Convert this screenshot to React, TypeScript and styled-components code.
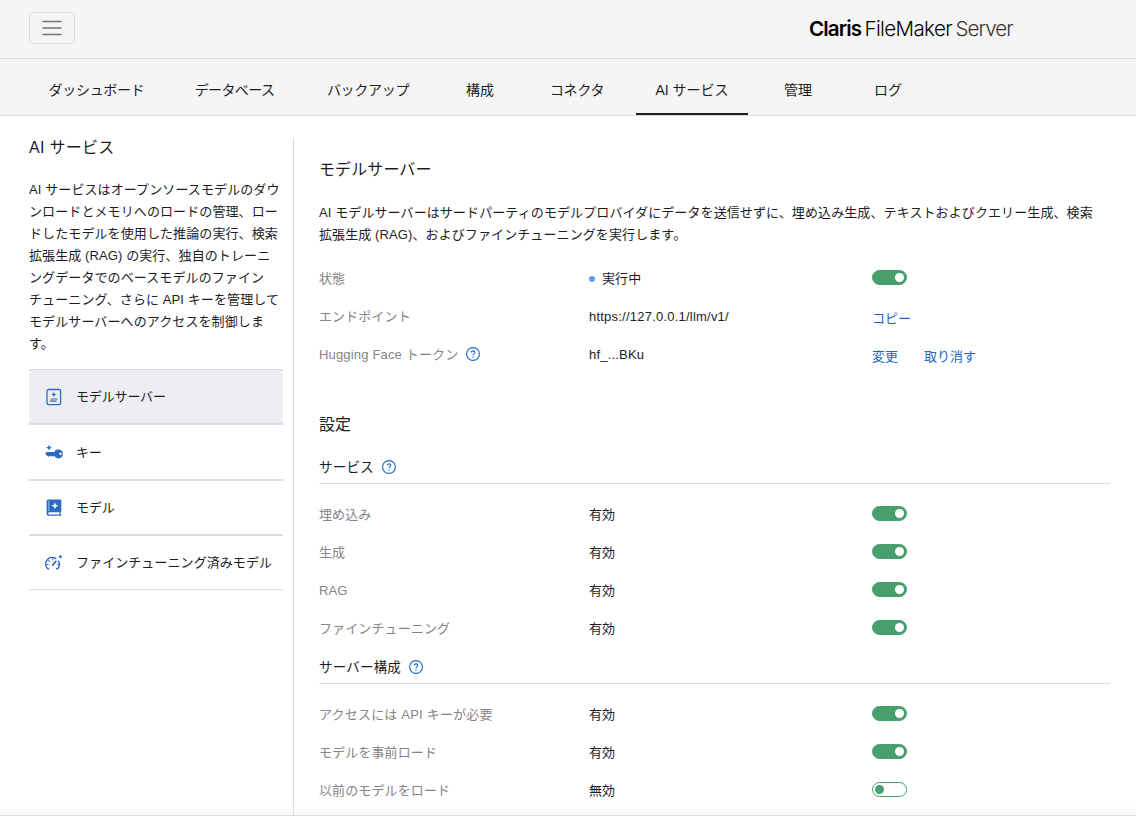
import React from "react";
import styled, { createGlobalStyle } from "styled-components";

const Global = createGlobalStyle`
  *, *::before, *::after { box-sizing: border-box; }
  html, body { margin: 0; padding: 0; background: #fff; }
  body {
    font-family: "Liberation Sans", "Noto Sans CJK JP", sans-serif;
    font-size: 13px;
    letter-spacing: 0.1px;
    color: #1d1d1f;
    overflow: hidden;
  }
`;

const Page = styled.div`
  display: flex;
  flex-direction: column;
  width: 1136px;
  height: 816px;
  overflow: hidden;
`;

const TopBar = styled.header`
  display: flex;
  align-items: flex-start;
  justify-content: space-between;
  height: 59px;
  padding: 12px 123px 0 29px;
  background: #f5f5f5;
  border-bottom: 1px solid #dcdcdc;
`;

const MenuButton = styled.button`
  display: flex;
  align-items: center;
  justify-content: center;
  width: 46px;
  height: 32px;
  padding: 0;
  border: 1px solid #dcdcdc;
  border-radius: 4px;
  background: transparent;
`;

const Brand = styled.div`
  display: flex;
  align-items: baseline;
  height: 32px;
  font-family: Inter, sans-serif;
  font-size: 20.6px;
  line-height: 33px;
  color: #000;
  white-space: nowrap;
`;

const BrandWord = styled.span<{ $weight: number; $width: number; $spacing: number; $color?: string }>`
  width: ${(p) => p.$width}px;
  font-weight: ${(p) => p.$weight};
  letter-spacing: ${(p) => p.$spacing}px;
  color: ${(p) => p.$color ?? "#000"};
`;

const TabBar = styled.nav`
  display: flex;
  height: 57px;
  padding-left: 18px;
  background: #f5f5f5;
  border-bottom: 1px solid #dcdcdc;
`;

const Tab = styled.a<{ $width: number; $active?: boolean; $spacing?: number }>`
  display: flex;
  align-items: center;
  justify-content: center;
  width: ${(p) => p.$width}px;
  height: 56px;
  padding-top: ${(p) => (p.$active ? 7 : 5)}px;
  border-bottom: ${(p) => (p.$active ? "2px solid #1d1d1f" : "0")};
  font-size: 14px;
  line-height: 20px;
  letter-spacing: ${(p) => p.$spacing ?? 0}px;
  white-space: nowrap;
`;

const Body = styled.div`
  display: flex;
  flex: 1;
  min-height: 0;
  padding-top: 22px;
  border-bottom: 1px solid #dcdcdc;
  background: linear-gradient(to top, #fafafa 0, #fff 18px);
`;

const Sidebar = styled.aside`
  width: 294px;
  padding: 0 10px 0 29px;
  border-right: 1px solid #dcdcdc;
`;

const SideTitle = styled.h1`
  margin: 0 0 21px;
  font-size: 16px;
  font-weight: 400;
  line-height: 20px;
  letter-spacing: 0.3px;
`;

const Copy = styled.p`
  margin: 0;
  line-height: 22px;
  white-space: nowrap;
`;

const Line = styled.span`
  display: block;
`;

const SideMenu = styled.ul`
  margin: 14px 0 0;
  padding: 0;
  list-style: none;
`;

const SideItem = styled.li<{ $active?: boolean; $height?: number }>`
  display: flex;
  align-items: center;
  gap: 13px;
  height: ${(p) => p.$height ?? 55}px;
  padding-left: 16px;
  border: solid #dcdcdc;
  border-width: 1px 0;
  background: ${(p) => (p.$active ? "#edeef3" : "transparent")};
  white-space: nowrap;
  svg { flex: none; }
`;

const SideLabel = styled.span<{ $spacing?: number }>`
  padding-bottom: 2px;
  letter-spacing: ${(p) => p.$spacing ?? -0.15}px;
`;

const Main = styled.main`
  width: 817px;
  padding: 21px 0 0 25px;
`;

const Heading = styled.h2`
  margin: 0;
  font-size: 16px;
  font-weight: 400;
  line-height: 22px;
`;

const Intro = styled(Copy)`
  margin: 21px 0 13px;
`;

const Row = styled.div`
  display: grid;
  grid-template-columns: 270px 283px 1fr;
  align-items: center;
  height: 38px;
  line-height: 20px;
  white-space: nowrap;
`;

const Label = styled.span<{ $spacing?: number }>`
  display: flex;
  align-items: center;
  gap: 8px;
  padding-top: 2px;
  color: #858585;
  letter-spacing: ${(p) => p.$spacing ?? 0.12}px;
  svg { margin-top: -2px; }
`;

const Value = styled.span<{ $spacing?: number }>`
  display: flex;
  align-items: center;
  padding-top: 2px;
  letter-spacing: ${(p) => p.$spacing ?? 0.1}px;
`;

const Dot = styled.i`
  width: 6px;
  height: 6px;
  margin: -1px 7px 0 0;
  border-radius: 50%;
  background: #589cf6;
`;

const Links = styled.span`
  display: flex;
  gap: 26px;
  padding-top: 5px;
  letter-spacing: 0;
`;

const Link = styled.a`
  color: #1d67c8;
`;

const Track = styled.span<{ $on: boolean }>`
  display: flex;
  align-items: center;
  justify-content: ${(p) => (p.$on ? "flex-end" : "flex-start")};
  width: 35px;
  height: 15px;
  margin-bottom: 1px;
  padding: 0 2px;
  border: 1px solid #489f6e;
  border-radius: 8px;
  background: ${(p) => (p.$on ? "#489f6e" : "#fff")};
  &::after {
    content: "";
    width: 9px;
    height: 9px;
    border-radius: 50%;
    background: ${(p) => (p.$on ? "#fff" : "#489f6e")};
  }
`;

const SettingsHeading = styled(Heading)`
  margin: 41px 0 18px;
`;

const GroupTitle = styled.h3<{ $first?: boolean }>`
  display: flex;
  align-items: center;
  gap: 8px;
  height: ${(p) => (p.$first ? 30 : 37)}px;
  margin: 0 1px 11px 0;
  padding-bottom: 2px;
  padding-top: ${(p) => (p.$first ? 0 : 7)}px;
  border-bottom: 1px solid #dcdcdc;
  font-size: 13.5px;
  font-weight: 400;
  line-height: 20px;
  letter-spacing: 0.2px;
  svg { margin-top: -1px; }
`;

const Help = () => (
  <svg width="14" height="14" viewBox="0 0 14 14" fill="none" stroke="#1d67c8">
    <circle cx="7" cy="7" r="6.4" strokeWidth="1.1" />
    <path d="M5.2 5.6C5.2 4.5 6 3.9 7 3.9S8.8 4.5 8.8 5.4C8.8 6.6 7 6.7 7 8.2" strokeWidth="1.1" />
    <circle cx="7" cy="10" r=".7" fill="#1d67c8" stroke="none" />
  </svg>
);

const ServerIcon = () => (
  <svg width="18" height="18" viewBox="0 0 18 18" fill="none" stroke="#2b6bc3">
    <rect x="2" y="1.5" width="13.6" height="15.2" rx="1.8" strokeWidth="1.3" />
    <path d="M8.8 3.9l.8 1.8 1.8.8-1.8.8-.8 1.8-.8-1.8-1.8-.8 1.8-.8z" fill="#2b6bc3" stroke="none" />
    <path d="M5.6 11h7M5 13.2h6.6" strokeWidth="1.2" />
  </svg>
);

const KeyIcon = () => (
  <svg width="18" height="18" viewBox="0 0 18 18" fill="#2b6bc3">
    <path d="M4 1.8l.9 2 2 .9-2 .9-.9 2-.9-2-2-.9 2-.9z" />
    <path
      fillRule="evenodd"
      d="M9.3 9a4.5 4.5 0 1 1 0 3.8l-1 1-1.2-1-1.1 1-1.2-1-1.2 1L.7 11.5V9.7L1.3 9zM15.4 9.5a1.2 1.2 0 1 0 .01 2.4 1.2 1.2 0 0 0-.01-2.4z"
    />
  </svg>
);

const BookIcon = () => (
  <svg width="18" height="18" viewBox="0 0 18 18">
    <path
      fill="#2b6bc3"
      fillRule="evenodd"
      d="M3.7.6h11.4c.7 0 1.2.5 1.2 1.1v10.7c0 .4-.3.7-.7.8v2.3h.7v1.3H4.2c-1.5 0-2.6-1-2.6-2.4V2.8C1.6 1.5 2.5.6 3.7.6zm.7 12.6c-1.6 0-1.6 2.3 0 2.3h10v-2.3z"
    />
    <path d="M3.8 1.8V12" stroke="#b6cdeb" strokeWidth=".8" />
    <path d="M9.9 3.3l1 2.5 2.5 1-2.5 1-1 2.5-1-2.5-2.5-1 2.5-1z" fill="#fff" />
  </svg>
);

const GaugeIcon = () => (
  <svg width="18" height="18" viewBox="0 0 18 18" fill="none" stroke="#2b6bc3" strokeLinecap="round">
    <path d="M3.6 14.8L2.4 14.4A6.5 6.5 0 0 1 10.8 4.6M13.6 7.3A6.5 6.5 0 0 1 12.9 14.5l-1.3.3" strokeWidth="1.4" />
    <path d="M7.8 4.5v1.4M3.7 6.6l.9.9M1.6 10.5h1.4M14 10.5h-1.3" strokeWidth="1.1" />
    <path d="M7.6 11.2l3.2-3.8" strokeWidth="1.7" />
    <path d="M15.3.4l.7 1.6 1.6.7-1.6.7-.7 1.6-.7-1.6-1.6-.7 1.6-.7z" fill="#2b6bc3" stroke="none" />
  </svg>
);

const tabs = [
  { label: "ダッシュボード", width: 157, spacing: -0.3 },
  { label: "データベース", width: 119, spacing: -0.6 },
  { label: "バックアップ", width: 148, spacing: -0.3 },
  { label: "構成", width: 76 },
  { label: "コネクタ", width: 118, spacing: -0.3 },
  { label: "AI サービス", width: 112, active: true },
  { label: "管理", width: 100 },
  { label: "ログ", width: 80 },
];

const sideItems = [
  { label: "モデルサーバー", icon: <ServerIcon />, height: 55, active: true },
  { label: "キー", icon: <KeyIcon />, height: 56 },
  { label: "モデル", icon: <BookIcon />, height: 55 },
  { label: "ファインチューニング済みモデル", icon: <GaugeIcon />, height: 55, spacing: 0.07 },
];

const sideCopy = [
  "AI サービスはオープンソースモデルのダウ",
  "ンロードとメモリへのロードの管理、ロー",
  "ドしたモデルを使用した推論の実行、検索",
  "拡張生成 (RAG) の実行、独自のトレーニ",
  "ングデータでのベースモデルのファイン",
  "チューニング、さらに API キーを管理して",
  "モデルサーバーへのアクセスを制御しま",
  "す。",
];

const services = ["埋め込み", "生成", "RAG", "ファインチューニング"];
const config = [
  { label: "アクセスには API キーが必要", on: true, spacing: 0.2 },
  { label: "モデルを事前ロード", on: true },
  { label: "以前のモデルをロード", on: false },
];

const ToggleRow = ({ label, on, spacing }: { label: string; on: boolean; spacing?: number }) => (
  <Row>
    <Label $spacing={spacing}>{label}</Label>
    <Value>{on ? "有効" : "無効"}</Value>
    <Track $on={on} role="switch" aria-checked={on} />
  </Row>
);

export default function App() {
  return (
    <Page>
      <Global />
      <TopBar>
        <MenuButton aria-label="メニュー">
          <svg width="20" height="16" viewBox="0 0 20 16" stroke="#777" strokeWidth="1.4" strokeLinecap="round">
            <path d="M1 1.5h18M1 8h18M1 14.5h18" />
          </svg>
        </MenuButton>
        <Brand>
          <BrandWord $weight={600} $width={55.5} $spacing={-0.9}>Claris</BrandWord>
          <BrandWord $weight={300} $width={91} $spacing={-0.65}>FileMaker</BrandWord>
          <BrandWord $weight={300} $width={57.5} $spacing={-1} $color="#333">Server</BrandWord>
        </Brand>
      </TopBar>
      <TabBar>
        {tabs.map((t) => (
          <Tab key={t.label} $width={t.width} $active={t.active} $spacing={t.spacing}>{t.label}</Tab>
        ))}
      </TabBar>
      <Body>
        <Sidebar>
          <SideTitle>AI サービス</SideTitle>
          <Copy>
            {sideCopy.map((l) => <Line key={l}>{l}</Line>)}
          </Copy>
          <SideMenu>
            {sideItems.map((i) => (
              <SideItem key={i.label} $active={i.active} $height={i.height}>
                {i.icon}
                <SideLabel $spacing={i.spacing}>{i.label}</SideLabel>
              </SideItem>
            ))}
          </SideMenu>
        </Sidebar>
        <Main>
          <Heading>モデルサーバー</Heading>
          <Intro>
            <Line>AI モデルサーバーはサードパーティのモデルプロバイダにデータを送信せずに、埋め込み生成、テキストおよびクエリー生成、検索</Line>
            <Line>拡張生成 (RAG)、およびファインチューニングを実行します。</Line>
          </Intro>
          <Row>
            <Label>状態</Label>
            <Value><Dot />実行中</Value>
            <Track $on role="switch" aria-checked />
          </Row>
          <Row>
            <Label>エンドポイント</Label>
            <Value $spacing={0.22}>https://127.0.0.1/llm/v1/</Value>
            <Links><Link>コピー</Link></Links>
          </Row>
          <Row>
            <Label $spacing={0.17}>Hugging Face トークン<Help /></Label>
            <Value $spacing={0.2}>hf_...BKu</Value>
            <Links><Link>変更</Link><Link>取り消す</Link></Links>
          </Row>
          <SettingsHeading>設定</SettingsHeading>
          <GroupTitle $first>サービス<Help /></GroupTitle>
          {services.map((s) => <ToggleRow key={s} label={s} on />)}
          <GroupTitle>サーバー構成<Help /></GroupTitle>
          {config.map((c) => <ToggleRow key={c.label} label={c.label} on={c.on} spacing={c.spacing} />)}
        </Main>
      </Body>
    </Page>
  );
}
